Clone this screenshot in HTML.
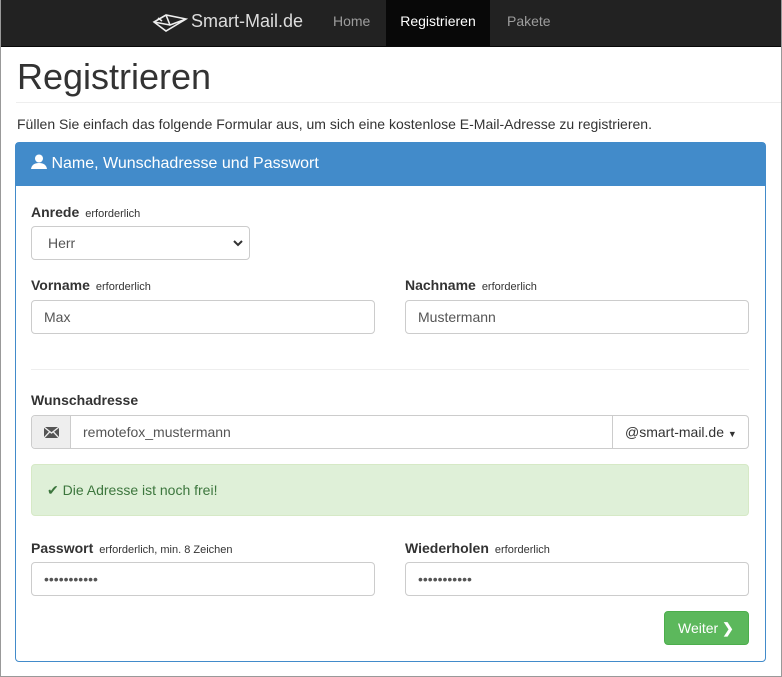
<!DOCTYPE html>
<html><head><meta charset="utf-8"><style>
*{box-sizing:border-box;margin:0;padding:0}
body{width:782px;height:677px;overflow:hidden;font-family:"Liberation Sans",sans-serif;font-size:14px;color:#333;background:#fff;position:relative}
.frame{position:absolute;left:0;top:0;width:782px;height:677px;border:1px solid #999;border-top:none;pointer-events:none;z-index:5}
.nav{position:absolute;left:0;top:0;width:782px;height:47px;background:#222;border-bottom:1px solid #080808}
.brand{position:absolute;top:11px;color:#ddd;font-size:18px}
.nav a{position:absolute;top:0;height:46px;line-height:43px;color:#9d9d9d;font-size:14px;text-decoration:none}
.abs{position:absolute}
h1{position:absolute;left:17px;top:56px;font-size:36px;font-weight:normal;color:#333}
.panel{position:absolute;left:15px;top:142px;width:751px;height:520px;border:1px solid #428bca;border-radius:4px}
.ph{height:43px;background:#428bca;color:#fff;font-size:16px;padding:11px 0 0 15px}
label{position:absolute;font-weight:bold;font-size:14px}
label small{font-weight:normal;font-size:11px;margin-left:6px}
.inp{position:absolute;height:34px;border:1px solid #ccc;border-radius:4px;padding:8px 12px;font-size:14px;color:#555;background:#fff}
</style></head><body>
<div class="frame"></div>
<div class="nav">
<svg class="abs" style="left:152px;top:13px" width="36" height="20" viewBox="0 0 36 20"><path d="M2 9 L14 2 L34 6 L14 18 Z M14 2 L18 12 L34 6 M2 9 L18 12 M6 5 L10 8" fill="none" stroke="#eee" stroke-width="1.6"/></svg>
<span class="brand" style="left:191px">Smart-Mail.de</span>
<a style="left:333px">Home</a>
<a style="left:386px;width:104px;background:#080808;color:#fff;text-align:center">Registrieren</a>
<a style="left:507px">Pakete</a>
</div>
<h1>Registrieren</h1>
<div class="abs" style="left:16px;top:102px;width:766px;border-top:1px solid #eee"></div>
<div class="abs" style="left:17px;top:116px">Füllen Sie einfach das folgende Formular aus, um sich eine kostenlose E-Mail-Adresse zu registrieren.</div>
<div class="panel"><div class="ph"><svg width="16" height="15" viewBox="0 0 16 15" style="vertical-align:-1px"><circle cx="8" cy="4.5" r="4" fill="#fff"/><path d="M0 15 Q1 9 8 9 Q15 9 16 15 Z" fill="#fff"/></svg> Name, Wunschadresse und Passwort</div></div>
<label style="left:31px;top:204px">Anrede<small>erforderlich</small></label>
<div class="inp" style="left:31px;top:226px;width:219px;padding-left:16px">Herr<svg class="abs" style="right:6px;top:13px" width="10" height="7" viewBox="0 0 10 7"><path d="M1 1 L5 5 L9 1" fill="none" stroke="#333" stroke-width="2"/></svg></div>
<label style="left:31px;top:277px">Vorname<small>erforderlich</small></label>
<label style="left:405px;top:277px">Nachname<small>erforderlich</small></label>
<div class="inp" style="left:31px;top:300px;width:344px">Max</div>
<div class="inp" style="left:405px;top:300px;width:344px">Mustermann</div>
<div class="abs" style="left:31px;top:369px;width:718px;border-top:1px solid #eee"></div>
<label style="left:31px;top:392px">Wunschadresse</label>
<div class="inp" style="left:31px;top:415px;width:718px;padding:0">
<div class="abs" style="left:0;top:0;width:39px;height:32px;background:#eee;border-right:1px solid #ccc;border-radius:4px 0 0 4px"><svg class="abs" style="left:12px;top:11px" width="15" height="11" viewBox="0 0 15 11"><rect width="15" height="11" fill="#555"/><path d="M0 0 L7.5 6 L15 0 M0 11 L5.5 5 M15 11 L9.5 5" stroke="#eee" stroke-width="1.3" fill="none"/></svg></div>
<span class="abs" style="left:51px;top:8px">remotefox_mustermann</span>
<div class="abs" style="left:580px;top:0;width:136px;height:32px;border-left:1px solid #ccc;color:#333;padding:8px 0 0 12px">@smart-mail.de <span style="font-size:9px">▼</span></div>
</div>
<div class="abs" style="left:31px;top:464px;width:718px;height:52px;background:#dff0d8;border:1px solid #d6e9c6;border-radius:4px;color:#3c763d;padding:17px 0 0 15px">✔ Die Adresse ist noch frei!</div>
<label style="left:31px;top:540px">Passwort<small>erforderlich, min. 8 Zeichen</small></label>
<label style="left:405px;top:540px">Wiederholen<small>erforderlich</small></label>
<div class="inp" style="left:31px;top:562px;width:344px">•••••••••••</div>
<div class="inp" style="left:405px;top:562px;width:344px">•••••••••••</div>
<div class="abs" style="left:664px;top:611px;width:85px;height:34px;background:#5cb85c;border:1px solid #4cae4c;border-radius:4px;color:#fff;padding:8px 0 0 13px">Weiter <b>❯</b></div>
</body></html>
